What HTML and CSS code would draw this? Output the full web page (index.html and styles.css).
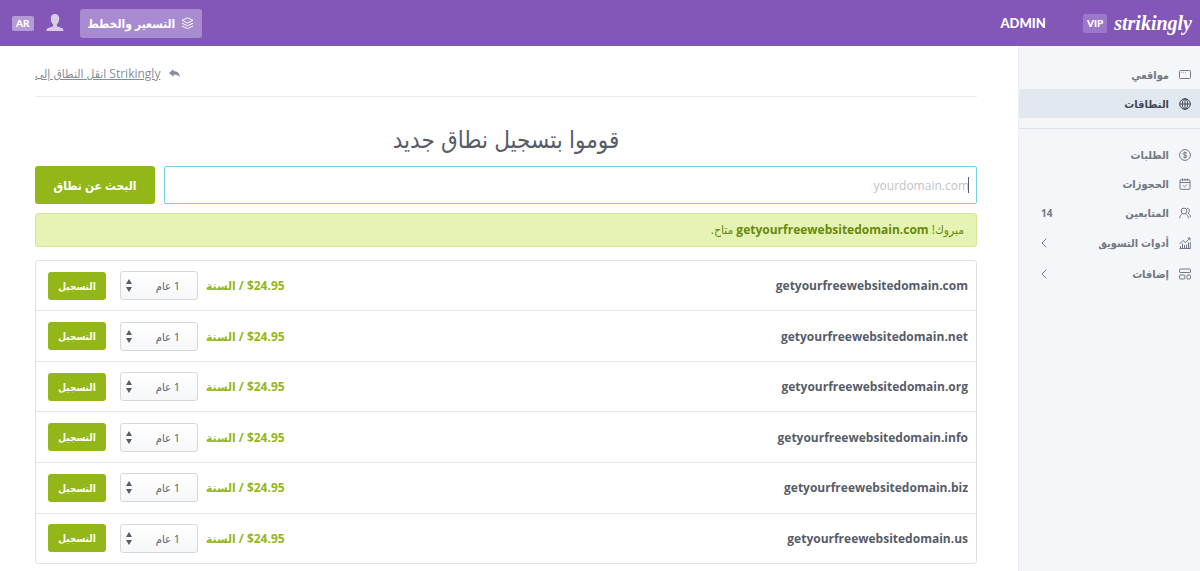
FILE: index.html
```html
<!DOCTYPE html>
<html lang="ar" dir="rtl">
<head>
  <meta charset="UTF-8">
  <meta name="viewport" content="width=device-width, initial-scale=1.0">
  <title>النطاقات - Strikingly</title>
  <link rel="stylesheet" href="styles.css">
</head>
<body>
  <header class="topbar">
    <a href="#" class="logo">strikingly</a>
    <span class="vip">VIP</span>
    <a href="#" class="admin">ADMIN</a>
    <a href="#" class="pricing">
      <svg width="13" height="13" viewBox="0 0 13 13" fill="none" stroke="#fff" stroke-linejoin="round"><path d="M6.5 .8 12 3.400 6.500 6 1 3.400zM1 6.200l5.500 2.600 5.500-2.600M1 9l5.500 2.600L12 9"/></svg>
      <span>التسعير والخطط</span>
    </a>
    <a href="#" class="account" aria-label="الحساب">
      <svg width="18" height="18" viewBox="0 0 18 18" fill="#d9cbe9"><path d="M9 0C6.300 0 4.800 2 4.800 4.600c0 2.400.8 4.600 2.300 5.600v1.700c-.4 1-5.200 1.500-6.200 3C.5 15.500.5 16.300.5 17h17c0-.7 0-1.500-.4-2.100-1-1.500-5.800-2-6.200-3v-1.700c1.500-1 2.300-3.200 2.300-5.600C13.200 2 11.700 0 9 0z"/></svg>
    </a>
    <button class="lang">AR</button>
  </header>

  <div class="layout">
    <nav class="sidebar">
      <ul class="menu">
        <li><a href="#" class="item">
          <svg width="12" height="12" viewBox="0 0 12 12"><rect x=".5" y="1.500" width="11" height="8" rx="1"/><path d="M2 3.500h1M4 3.500h1M6 3.500h1" opacity=".6"/></svg>
          <span>مواقعي</span>
        </a></li>
        <li><a href="#" class="item active">
          <svg width="12" height="12" viewBox="0 0 12 12"><circle cx="6" cy="6" r="5.300"/><ellipse cx="6" cy="6" rx="2.700" ry="5.300"/><path d="M.7 6h10.600M6 .7v10.600"/></svg>
          <span>النطاقات</span>
        </a></li>
      </ul>
      <ul class="menu">
        <li><a href="#" class="item">
          <svg width="12" height="12" viewBox="0 0 12 12"><circle cx="6" cy="6" r="5.400"/><path d="M8 4.300C7.600 3.700 6.900 3.500 6 3.500c-1.200 0-2 .4-2 1.200C4 6.400 8 5.500 8 7.300c0 .8-.8 1.200-2 1.200-1 0-1.700-.3-2.100-.9M6 2.500v7"/></svg>
          <span>الطلبات</span>
        </a></li>
        <li><a href="#" class="item">
          <svg width="12" height="12" viewBox="0 0 12 12"><rect x="1" y="1.800" width="10" height="9.500" rx="1"/><path d="M1 4.500h10M3.500.5v2.300M6 .5v2.300M8.500.5v2.300M4.200 7.500l1.300 1.300 2.300-2.300"/></svg>
          <span>الحجوزات</span>
        </a></li>
        <li><a href="#" class="item">
          <svg width="12" height="12" viewBox="0 0 12 12"><circle cx="5" cy="4" r="2.900"/><path d="M.6 11.300C.8 9 2 7.400 3.500 6.600M9.400 11.300C9.200 9 8 7.400 6.500 6.600M8 1.200c2.600 0 3.300 3.700 1 4.900 1.500.8 2.300 2 2.500 4.200"/></svg>
          <span>المتابعين</span>
          <span class="count">14</span>
        </a></li>
        <li><a href="#" class="item parent">
          <svg width="12" height="12" viewBox="0 0 12 12"><path d="M.5 7 4 3.500l2.500 2L11 1M8.500 1H11v2.500M1.500 11.500V9M3.500 11.500V6.500M5.500 11.500V8M7.500 11.500V7.500M9.500 11.500V5.500M11.300 11.500V5M.5 11.500h11"/></svg>
          <span>أدوات التسويق</span>
          <svg class="chevron" width="6" height="10" viewBox="0 0 6 10"><path d="M5.300.7 1 5l4.300 4.300"/></svg>
        </a></li>
        <li><a href="#" class="item parent">
          <svg width="12" height="12" viewBox="0 0 12 12"><rect x=".6" y="1" width="10.800" height="3.500" rx=".5"/><rect x=".6" y="7" width="5.200" height="4" rx=".5"/><rect x="8" y="7" width="3.400" height="4" rx=".5"/></svg>
          <span>إضافات</span>
          <svg class="chevron" width="6" height="10" viewBox="0 0 6 10"><path d="M5.300.7 1 5l4.300 4.300"/></svg>
        </a></li>
      </ul>
    </nav>

    <main class="content">
      <div class="transfer">
        <a href="#" dir="ltr"><span>انقل النطاق إلى Strikingly</span>
          <svg width="11" height="9" viewBox="0 0 11 9" fill="#868d98"><path d="M4.500 0v2.200C8.500 2.200 10.800 4 11 8.500 9.800 6.200 7.800 5.500 4.500 5.500v2.200L0 3.900z"/></svg>
        </a>
      </div>

      <h1 class="title">قوموا بتسجيل نطاق جديد</h1>

      <form class="search">
        <div class="field">
          <input type="text" placeholder="yourdomain.com" aria-label="اسم النطاق">
          <span class="caret"></span>
        </div>
        <button type="submit" class="btn btn-search">البحث عن نطاق</button>
      </form>

      <p class="notice">مبروك! <b>getyourfreewebsitedomain.com</b> متاح.</p>

      <div class="results">
        <table>
          <tbody id="domains"></tbody>
        </table>
      </div>
    </main>
  </div>

  <script src="script.js"></script>
</body>
</html>
```

FILE: styles.css
```css
* {
  box-sizing: border-box;
}

body {
  margin: 0;
  font-family: "Open Sans", "DejaVu Sans Condensed", "DejaVu Sans", sans-serif;
  font-size: 12px;
  color: #565d69;
  background: #fff;
}

a {
  color: inherit;
  text-decoration: none;
}

button,
input,
select {
  font-family: inherit;
}

svg {
  flex: none;
}

/* top bar */
.topbar {
  display: flex;
  align-items: center;
  height: 46px;
  padding: 0 8px 0 12px;
  background: #8257b8;
  color: #fff;
}

.logo {
  font-family: "Liberation Serif", serif;
  font-size: 20px;
  font-weight: bold;
  font-style: italic;
  line-height: 24px;
}

.vip,
.lang {
  font-family: Lato, sans-serif;
  font-size: 10px;
  font-weight: 900;
  color: #fff;
  border-radius: 2px;
}

.vip {
  margin-right: 7px;
  padding: 0 4px;
  line-height: 19px;
  background: #9c78c8;
}

.admin {
  margin-right: 37px;
  font-family: Lato, sans-serif;
  font-size: 13px;
  font-weight: 900;
}

.pricing {
  display: flex;
  align-items: center;
  gap: 6px;
  height: 29px;
  margin-right: auto;
  padding: 0 8px;
  border-radius: 3px;
  background: #a88bd0;
  font-size: 12px;
  font-weight: bold;
}

.account {
  display: flex;
  margin-right: 16px;
}

.lang {
  margin-right: 12px;
  padding: 0 4px;
  border: 0;
  line-height: 15px;
  background: #b49ad6;
}

/* sidebar */
.layout {
  display: flex;
  align-items: stretch;
  min-height: calc(100vh - 46px);
}

.sidebar {
  flex: none;
  width: 182px;
  padding-top: 14px;
  background: #f4f6fa;
  border-left: 1px solid #eceef3;
}

.menu {
  margin: 0;
  padding: 0;
  list-style: none;
}

.menu + .menu {
  margin-top: 10px;
  padding-top: 11px;
  border-top: 1px solid #e0e1ee;
}

.item {
  display: flex;
  align-items: center;
  gap: 10px;
  height: 29px;
  padding: 0 9px 0 22px;
  font-size: 11px;
  font-weight: bold;
  color: #727986;
}

.item.parent {
  height: 31px;
}

.item.active {
  background: #e2e8f0;
  color: #434956;
}

.item svg {
  fill: none;
  stroke: currentColor;
  stroke-width: 1;
}

.count,
.chevron {
  margin-right: auto;
}

.count {
  font-size: 10px;
}

/* content */
.content {
  flex: 1;
  min-width: 0;
  padding: 0 41px 7px 35px;
}

.transfer {
  display: flex;
  justify-content: flex-end;
  padding: 18px 0 13px;
  border-bottom: 1px solid #ececee;
}

.transfer a {
  display: flex;
  align-items: center;
  gap: 9px;
  line-height: 19px;
  color: #868d98;
}

.transfer span {
  text-decoration: underline;
}

.title {
  margin: 25px 0 10px;
  font-size: 24px;
  font-weight: normal;
  line-height: 34px;
  text-align: center;
}

.search {
  display: flex;
  gap: 9px;
}

.field {
  position: relative;
  flex: 1;
}

.field input {
  display: block;
  width: 100%;
  height: 38px;
  padding: 0 7px;
  border: 1px solid #7accec;
  border-radius: 2px;
  font-size: 12px;
  color: #565d69;
  outline: 0;
}

.field input::placeholder {
  color: #c0c3c9;
  opacity: 1;
}

.caret {
  position: absolute;
  top: 11px;
  right: 8px;
  width: 1px;
  height: 16px;
  background: #565d69;
}

.btn {
  border: 0;
  border-radius: 3px;
  background: #93b719;
  color: #fff;
  font-weight: bold;
  cursor: pointer;
}

.btn-search {
  width: 120px;
  font-size: 12px;
}

.notice {
  margin: 9px 0 13px;
  padding: 0 12px;
  border: 1px solid #d3e596;
  border-radius: 3px;
  background: #e5f4b4;
  font-size: 12px;
  line-height: 32px;
  color: #6a880c;
}

.results {
  border: 1px solid #dfe1e4;
  border-radius: 3px;
}

.results table {
  width: 100%;
  height: 302px;
  border-collapse: collapse;
}

.results td {
  padding: 0;
  border-top: 1px solid #e3e5e8;
}

.results tr:first-child td {
  border-top: 0;
}

.results .domain {
  padding-right: 8px;
  font-size: 12px;
  font-weight: bold;
}

.offer {
  display: flex;
  align-items: center;
  justify-content: flex-end;
  padding-left: 12px;
}

.price {
  margin-left: 8px;
  font-size: 12px;
  font-weight: bold;
  color: #93b719;
}

.years {
  position: relative;
  margin-left: 14px;
}

.years select {
  display: block;
  width: 78px;
  height: 29px;
  padding: 0 17px 0 20px;
  appearance: none;
  border: 1px solid #d6d8dd;
  border-radius: 3px;
  background: linear-gradient(#fff, #f6f7f9);
  font-size: 11px;
  color: #565d69;
}

.years svg {
  position: absolute;
  top: 8px;
  left: 6px;
  fill: #565d69;
  pointer-events: none;
}

.btn-register {
  width: 58px;
  height: 28px;
  padding: 0;
  font-size: 10px;
}
```

FILE: script.js
```js
const domaines = ["com", "net", "org", "info", "biz", "us"];
const tbody = document.getElementById("domains");

domaines.forEach(ext => {
  const nom = `getyourfreewebsitedomain.${ext}`;
  const ligne = document.createElement("tr");
  ligne.innerHTML = `
    <td class="domain">${nom}</td>
    <td>
      <div class="offer">
        <span class="price">$24.95 / السنة</span>
        <div class="years">
          <select aria-label="${nom}">
            <option>1 عام</option>
          </select>
          <svg width="6" height="13" viewBox="0 0 6 13"><path d="M0 5 3 0l3 5zM0 8h6l-3 5z"/></svg>
        </div>
        <button class="btn btn-register">التسجيل</button>
      </div>
    </td>
  `;
  tbody.appendChild(ligne);
});
```
